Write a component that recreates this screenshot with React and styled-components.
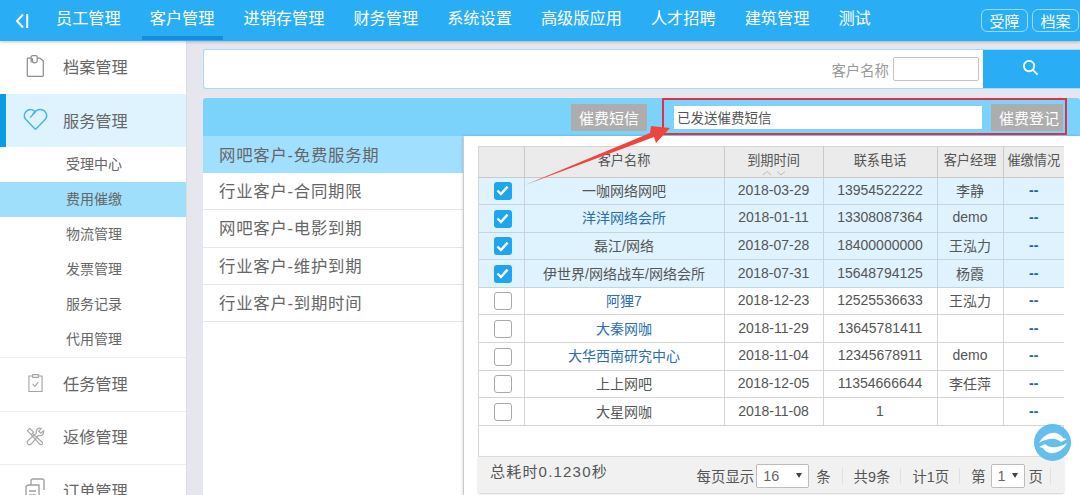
import React from 'react';
import styled, { createGlobalStyle } from 'styled-components';

const navItems = ['员工管理', '客户管理', '进销存管理', '财务管理', '系统设置', '高级版应用', '人才招聘', '建筑管理', '测试'];
const subItems = ['受理中心', '费用催缴', '物流管理', '发票管理', '服务记录', '代用管理'];
const groups = ['网吧客户-免费服务期', '行业客户-合同期限', '网吧客户-电影到期', '行业客户-维护到期', '行业客户-到期时间'];
const rows = [
  { name: '一咖网络网吧', date: '2018-03-29', phone: '13954522222', mgr: '李静', checked: true },
  { name: '洋洋网络会所', date: '2018-01-11', phone: '13308087364', mgr: 'demo', checked: true, link: true },
  { name: '磊江/网络', date: '2018-07-28', phone: '18400000000', mgr: '王泓力', checked: true },
  { name: '伊世界/网络战车/网络会所', date: '2018-07-31', phone: '15648794125', mgr: '杨霞', checked: true },
  { name: '阿狸7', date: '2018-12-23', phone: '12525536633', mgr: '王泓力', link: true },
  { name: '大秦网咖', date: '2018-11-29', phone: '13645781411', mgr: '', link: true },
  { name: '大华西南研究中心', date: '2018-11-04', phone: '12345678911', mgr: 'demo', link: true },
  { name: '上上网吧', date: '2018-12-05', phone: '11354666644', mgr: '李任萍' },
  { name: '大星网咖', date: '2018-11-08', phone: '1', mgr: '' },
];

const GlobalStyle = createGlobalStyle`
  html, body { margin: 0; padding: 0; height: 495px; overflow: hidden; }
  body { font-family: "Liberation Sans", "Noto Sans CJK SC", sans-serif; color: #666; background: #e6e7ee; }
  * { box-sizing: border-box; }
`;

const Page = styled.div`
  position: relative;
  width: 1080px;
  height: 495px;
  overflow: hidden;
  display: flex;
  flex-direction: column;
`;
const TopBar = styled.header`
  height: 41px;
  flex: none;
  display: flex;
  align-items: stretch;
  background: #29aef5;
  box-shadow: 0 1px 3px rgba(0, 0, 0, 0.25);
  position: relative;
  z-index: 2;
  padding-right: 1px;
`;
const BackBtn = styled.div`
  width: 41px;
  margin-right: 7px;
  display: flex;
  align-items: center;
  justify-content: center;
  color: #fff;
`;
const Nav = styled.nav`
  display: flex;
  gap: 13px;
  flex: 1;
`;
const NavItem = styled.a`
  padding: 0 8px 2px;
  height: 40px;
  display: flex;
  align-items: center;
  font-size: 16.2px;
  color: #fff;
  border-bottom: 4px solid ${p => (p.$active ? '#0f8fe3' : 'transparent')};
`;
const TopActions = styled.div`
  display: flex;
  gap: 4px;
  padding-top: 9px;
`;
const TopBtn = styled.button`
  width: 47px;
  height: 23px;
  padding: 0;
  font: 15px "Liberation Sans", "Noto Sans CJK SC", sans-serif;
  color: #fff;
  background: transparent;
  border: 1px solid #9bdbfa;
  border-radius: 6px;
`;
const Body = styled.div`
  flex: 1;
  display: flex;
  min-height: 0;
`;
const Sidebar = styled.aside`
  width: 187px;
  flex: none;
  background: #fff;
  border-right: 1px solid #dcdde3;
`;
const MenuRow = styled.div`
  height: ${p => (p.$line ? '53.5px' : '53px')};
  display: flex;
  align-items: center;
  font-size: 16.2px;
  color: #666;
  gap: 14px;
  padding-bottom: ${p => (p.$active ? '2px' : '3px')};
  background: ${p => (p.$active ? '#def3fe' : '#fff')};
  border-left: ${p => (p.$active ? '6px solid #0d9be8' : 'none')};
  padding-left: ${p => (p.$active ? '16px' : '22px')};
  border-bottom: ${p => (p.$line ? '1px solid #eeeeee' : 'none')};
`;
const IconSlot = styled.span`
  width: 27px;
  display: flex;
  justify-content: center;
  flex: none;
`;
const SubList = styled.div`
  border-bottom: 1px solid #eeeeee;
`;
const SubRow = styled.div`
  height: 35px;
  display: flex;
  align-items: center;
  padding: 0 0 3px 66px;
  font-size: 14px;
  color: #666;
  background: ${p => (p.$active ? '#9fdffb' : 'transparent')};
`;
const Main = styled.main`
  flex: 1;
  padding: 8px 0 0 16px;
  min-width: 0;
  display: flex;
  flex-direction: column;
`;
const SearchPanel = styled.div`
  height: 40px;
  flex: none;
  display: flex;
  align-items: stretch;
  justify-content: flex-end;
  background: #fff;
  border: 1px solid #a4dcf6;
  border-right: none;
  border-radius: 3px 0 0 3px;
`;
const SearchLabel = styled.label`
  display: flex;
  align-items: center;
  gap: 4px;
  font-size: 14.4px;
  color: #999;
  margin-right: 4px;
`;
const SearchInput = styled.div`
  width: 86px;
  height: 24px;
  border: 1px solid #c4c4c4;
  border-radius: 2px;
  background: #fff;
`;
const SearchBtn = styled.button`
  width: 97px;
  border: none;
  padding: 0 2px 4px 0;
  background: #29aef5;
  color: #fff;
  display: flex;
  align-items: center;
  justify-content: center;
`;
const Toolbar = styled.div`
  margin-top: 9px;
  height: 38px;
  flex: none;
  display: flex;
  align-items: center;
  background: #7bd3fb;
  border-radius: 3px 3px 0 0;
`;
const GrayBtn = styled.button`
  width: ${p => p.$w}px;
  height: 27px;
  margin-left: ${p => p.$ml}px;
  padding: 0 0 0 ${p => p.$pl || 0}px;
  border: none;
  border-radius: 1px;
  background: #adadad;
  color: #fff;
  font: 15px "Liberation Sans", "Noto Sans CJK SC", sans-serif;
`;
const NoteInput = styled.div`
  width: 308px;
  height: 23px;
  margin-left: 27px;
  padding-left: 3px;
  background: #fff;
  display: flex;
  align-items: center;
  font-size: 13.5px;
  color: #555;
`;
const Split = styled.div`
  flex: 1;
  display: flex;
  min-height: 0;
`;
const GroupList = styled.ul`
  list-style: none;
  margin: 0;
  padding: 0;
  width: 260px;
  flex: none;
  background: #fff;
`;
const GroupItem = styled.li`
  height: 37.2px;
  display: flex;
  align-items: center;
  padding: 0 0 2px 16px;
  font-size: 16.4px;
  letter-spacing: 0.75px;
  color: #666;
  background: ${p => (p.$active ? '#a0e0fe' : '#fff')};
  border-bottom: ${p => (p.$active ? 'none' : '1px solid #e6e6e6')};
`;
const TablePanel = styled.section`
  flex: 1;
  min-width: 0;
  margin-left: 1px;
  padding: 10px 16px 2px 14px;
  background: #fff;
  box-shadow: -1px 0 3px rgba(0, 0, 0, 0.2);
  display: flex;
  flex-direction: column;
`;
const TableBox = styled.div`
  height: 310px;
  flex: none;
  border: 1px solid #d6d6d6;
  border-bottom: none;
  background: #fff;
`;
const Table = styled.table`
  width: 585px;
  table-layout: fixed;
  border-collapse: collapse;
  font-size: 14px;
`;
const Th = styled.th`
  height: 30px;
  position: relative;
  padding: 0 0 4px;
  background: #ebebeb;
  border: 1px solid #c9c9c9;
  border-top: none;
  font-weight: normal;
  font-size: 13.2px;
  color: #555;
  white-space: nowrap;
  &:first-child { border-left: none; }
  &:last-child { border-right: none; }
`;
const SortMark = styled.span`
  position: absolute;
  left: 0;
  right: 0;
  bottom: 1px;
  display: flex;
  justify-content: center;
  color: #bbb;
`;
const Td = styled.td`
  height: 27.6px;
  padding: 0 0 2px;
  text-align: center;
  white-space: nowrap;
  color: ${p => (p.$link ? '#2a6db0' : '#555')};
  background: ${p => (p.$on ? '#def3fe' : '#fff')};
  border: 1px solid #d4d4d4;
  border-color: ${p => (p.$on ? '#c3d6e0' : '#d4d4d4')};
  &:first-child { border-left: none; padding: 0 0 0 3px; }
  &:last-child { border-right: none; }
`;
const Dash = styled.span`
  color: #25609f;
  font-weight: bold;
  font-size: 14px;
`;
const Check = styled.span`
  display: inline-flex;
  vertical-align: middle;
  align-items: center;
  justify-content: center;
  width: 18px;
  height: 18px;
  border-radius: 3px;
  background: ${p => (p.$on ? '#1fa5ee' : '#fff')};
  border: ${p => (p.$on ? 'none' : '1px solid #a9a9a9')};
`;
const Footer = styled.footer`
  height: 37px;
  flex: none;
  display: flex;
  align-items: center;
  padding: 0 13px 0 12px;
  background: #f1f1f1;
  border-top: 1px solid #dcdcdc;
  border-radius: 0 0 3px 3px;
  box-shadow: 0 1px 2px rgba(0, 0, 0, 0.2);
  font-size: 14px;
  color: #555;
`;
const Elapsed = styled.span`
  font-size: 15px;
  letter-spacing: 1.2px;
  margin-right: auto;
  padding-bottom: 9px;
`;
const Pager = styled.div`
  display: flex;
  align-items: center;
  font-size: 14.4px;
  padding-top: 1px;
`;
const PagerPart = styled.span`
  display: flex;
  align-items: center;
  height: 16px;
  padding: 0 ${p => p.$pr || 11}px 0 11px;
  border-right: 1px solid #e0e0e0;
`;
const SelectBox = styled.span`
  width: ${p => p.$w}px;
  height: 24px;
  display: flex;
  align-items: center;
  justify-content: space-between;
  padding: 0 6px;
  margin: 0 ${p => p.$mr}px 0 ${p => p.$ml}px;
  background: #fff;
  border: 1px solid #bdbdbd;
  border-radius: 2px;
  color: #666;
`;
const Caret = styled.span`
  width: 0;
  height: 0;
  border: 3px solid transparent;
  border-top: 5px solid #444;
  border-bottom: none;
`;
const Annotation = styled.svg`
  position: absolute;
  left: 0;
  top: 0;
  pointer-events: none;
  z-index: 3;
`;
const SyncBadge = styled.div`
  position: absolute;
  left: 1034px;
  top: 424px;
  width: 37px;
  height: 37px;
  border-radius: 50%;
  background: rgba(88, 186, 236, 0.92);
  z-index: 3;
  display: flex;
  align-items: center;
  justify-content: center;
`;

const BackIcon = () => (
  <svg width="16" height="18" viewBox="0 0 16 18" fill="none" stroke="#fff" strokeWidth="2">
    <path d="M10 2.5 L4 9 L10 15.5" />
    <path d="M14.2 2 V16" />
  </svg>
);
const ClipIcon = () => (
  <svg width="19" height="24" viewBox="0 0 22 26" fill="none" stroke="#8c8c8c" strokeWidth="1.4">
    <path d="M6 4 H2 Q1.5 4 1.5 5 V24 Q1.5 25 2.5 25 H19 Q20 25 20 24 V7 L16 4 H13" />
    <path d="M6 9 V2.5 Q6 1 8 1 H11 Q13 1 13 2.5 V7 Q13 9.5 9.5 9.5 Q7.5 9.5 7.5 7.5 V4" />
  </svg>
);
const HeartIcon = () => (
  <svg width="25" height="23" viewBox="0 0 26 24" fill="none" stroke="#45b5ea" strokeWidth="1.5">
    <path d="M13 22.5 L2.5 11.5 C-0.5 7 3 1.5 8 1.5 C10 1.5 11.5 2.5 13 4 L7.5 10" />
    <path d="M13 22.5 L23.5 11.5 C26.5 7 23 1.5 18 1.5 C15 1.5 12 3.5 10 7" />
  </svg>
);
const TaskIcon = () => (
  <svg width="15" height="20" viewBox="0 0 16 20" fill="none" stroke="#a5a5a5" strokeWidth="1.2">
    <path d="M5 2.5 H1 V19 H15 V2.5 H11" />
    <path d="M5 1 H11 V4 H5 Z" />
    <path d="M5 11 L7.3 13.5 L11 9" />
  </svg>
);
const ToolIcon = () => (
  <svg width="19" height="19" viewBox="0 0 20 20" fill="none" stroke="#aaaaaa" strokeWidth="1.3">
    <path d="M1.5 4 L4 1.5 L8 5.5 L5.5 8 Z" />
    <path d="M7 7 L17 16 Q18 18 16.5 18.5 Q15 19 14 17.5 L5.5 8" />
    <path d="M18.5 4 L15.5 6.5 L13.5 4.5 L16 1.5 Q12.5 0.5 11 3.5 Q10.5 5 11 6.5 L2 14.5 Q0.5 16.5 2 18 Q3.5 19.5 5.5 18 L13 9 Q15 9.5 17 8.5 Q19 7 18.5 4 Z" />
  </svg>
);
const OrderIcon = () => (
  <svg width="22" height="24" viewBox="0 0 22 24" fill="none" stroke="#a0a0a0" strokeWidth="1.4">
    <path d="M6 7 V3 Q6 1 8 1 H17 Q19 1 19 3 V12" />
    <path d="M1 10 Q1 7 4 7 H14 V22 H3 Q1 22 1 20 Z" />
    <path d="M4 13 H11 M4 17 H11" />
  </svg>
);
const SearchGlyph = () => (
  <svg width="17" height="17" viewBox="0 0 18 18" fill="none" stroke="#fff" strokeWidth="2">
    <circle cx="7.5" cy="7.5" r="5.5" />
    <path d="M11.5 11.5 L16.5 16.5" />
  </svg>
);
const CheckMark = () => (
  <svg width="13" height="11" viewBox="0 0 14 12" fill="none" stroke="#fff" strokeWidth="2.6">
    <path d="M1.5 6 L5.3 9.8 L12.5 1.8" />
  </svg>
);
const SyncIcon = () => (
  <svg width="32" height="24" viewBox="0 0 32 24" fill="#fff">
    <path d="M2 12 C6 4 14 1 19 2 C23 3 25 5 26 7 L30 8 L24 11 C20 7 12 6 2 12 Z" />
    <path d="M30 12 C26 20 18 23 13 22 C9 21 7 19 6 17 L2 16 L8 13 C12 17 20 18 30 12 Z" />
  </svg>
);

const App = () => {
  return (
    <Page>
      <GlobalStyle />
      <TopBar>
        <BackBtn><BackIcon /></BackBtn>
        <Nav>
          {navItems.map(n => <NavItem key={n} $active={n === '客户管理'}>{n}</NavItem>)}
        </Nav>
        <TopActions>
          <TopBtn>受障</TopBtn>
          <TopBtn>档案</TopBtn>
        </TopActions>
      </TopBar>
      <Body>
        <Sidebar>
          <MenuRow><IconSlot><ClipIcon /></IconSlot>档案管理</MenuRow>
          <MenuRow $active><IconSlot><HeartIcon /></IconSlot>服务管理</MenuRow>
          <SubList>
            {subItems.map(s => <SubRow key={s} $active={s === '费用催缴'}>{s}</SubRow>)}
          </SubList>
          <MenuRow $line><IconSlot><TaskIcon /></IconSlot>任务管理</MenuRow>
          <MenuRow $line><IconSlot><ToolIcon /></IconSlot>返修管理</MenuRow>
          <MenuRow><IconSlot><OrderIcon /></IconSlot>订单管理</MenuRow>
        </Sidebar>
        <Main>
          <SearchPanel>
            <SearchLabel>客户名称<SearchInput /></SearchLabel>
            <SearchBtn><SearchGlyph /></SearchBtn>
          </SearchPanel>
          <Toolbar>
            <GrayBtn $w={76} $ml={368}>催费短信</GrayBtn>
            <NoteInput>已发送催费短信</NoteInput>
            <GrayBtn $w={72} $ml={9} $pl={4}>催费登记</GrayBtn>
          </Toolbar>
          <Split>
            <GroupList>
              {groups.map((g, i) => <GroupItem key={g} $active={i === 0}>{g}</GroupItem>)}
            </GroupList>
            <TablePanel>
              <TableBox>
                <Table>
                  <colgroup>
                    <col width="45" /><col width="200" /><col width="99" /><col width="114" /><col width="66" /><col width="61" />
                  </colgroup>
                  <thead>
                    <tr>
                      <Th />
                      <Th>客户名称</Th>
                      <Th>
                        到期时间
                        <SortMark>
                          <svg width="26" height="6" viewBox="0 0 26 6" fill="none" stroke="#bbb" strokeWidth="1">
                            <path d="M2 5 L6 1.5 L10 5 M16 1.5 L20 5 L24 1.5" />
                          </svg>
                        </SortMark>
                      </Th>
                      <Th>联系电话</Th>
                      <Th>客户经理</Th>
                      <Th>催缴情况</Th>
                    </tr>
                  </thead>
                  <tbody>
                    {rows.map(r => (
                      <tr key={r.name}>
                        <Td $on={r.checked}><Check $on={r.checked}>{r.checked && <CheckMark />}</Check></Td>
                        <Td $on={r.checked} $link={r.link}>{r.name}</Td>
                        <Td $on={r.checked}>{r.date}</Td>
                        <Td $on={r.checked}>{r.phone}</Td>
                        <Td $on={r.checked}>{r.mgr}</Td>
                        <Td $on={r.checked}><Dash>--</Dash></Td>
                      </tr>
                    ))}
                  </tbody>
                </Table>
              </TableBox>
              <Footer>
                <Elapsed>总耗时0.1230秒</Elapsed>
                <Pager>
                  <PagerPart>每页显示<SelectBox $w={53} $ml={2} $mr={7}>16<Caret /></SelectBox>条</PagerPart>
                  <PagerPart $pr={10}>共9条</PagerPart>
                  <PagerPart $pr={10}>计1页</PagerPart>
                  <PagerPart $pr={7}>第<SelectBox $w={34} $ml={5} $mr={4}>1<Caret /></SelectBox>页</PagerPart>
                </Pager>
              </Footer>
            </TablePanel>
          </Split>
        </Main>
      </Body>
      <Annotation width="1080" height="495" viewBox="0 0 1080 495">
        <rect x="663" y="99" width="403" height="35" fill="none" stroke="#dc3348" strokeWidth="2" />
        <path d="M525 185 L650 133 L651 126 L670 128 L656 143 L654 137 Z" fill="#f0453f" />
      </Annotation>
      <SyncBadge><SyncIcon /></SyncBadge>
    </Page>
  );
};

export default App;
